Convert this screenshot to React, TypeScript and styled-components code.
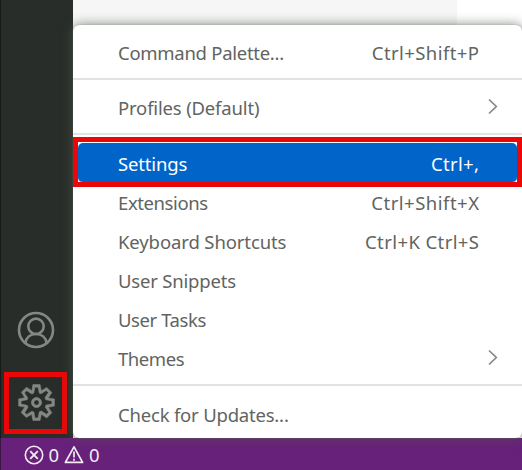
import React from 'react';
import styled, { createGlobalStyle } from 'styled-components';

const GlobalStyle = createGlobalStyle`
  * { box-sizing: border-box; }
  body { margin: 0; overflow: hidden; }
`;

const Window = styled.div`
  position: relative;
  width: 522px;
  height: 470px;
  overflow: hidden;
  display: grid;
  grid-template-columns: 73px 1fr;
  grid-template-rows: 438px 32px;
  background: #fff;
  font-family: 'Noto Sans', 'Open Sans', sans-serif;
`;

const ActivityBar = styled.nav`
  display: flex;
  flex-direction: column;
  align-items: center;
  justify-content: flex-end;
  background: #292d29;
  border-left: 1px solid #171917;
  padding: 0 1px 4px 0;
`;

const AccountButton = styled.div`
  display: flex;
  margin: 0 1px 23px 0;
`;

const GearFrame = styled.div`
  display: flex;
  align-items: center;
  justify-content: center;
  width: 63px;
  height: 62px;
  margin-right: 2px;
  padding: 0 0 1px 2px;
  border: 5px solid #eb0707;
`;

const Editor = styled.main`
  background: linear-gradient(to right, #f5f6f5 384px, #fff 384px);
`;

const StatusBar = styled.footer`
  grid-column: 1 / -1;
  display: flex;
  align-items: center;
  padding: 2px 0 0 22.5px;
  background: #68217a;
  border-left: 1px solid #3a1643;
  color: #f3ecf5;
  font-size: 18.5px;
  line-height: 24px;
  svg { display: block; }
`;

const Count = styled.span<{ $gap: number }>`
  margin: 0 ${p => p.$gap}px 0 5px;
`;

const Menu = styled.div`
  position: absolute;
  left: 73px;
  top: 25px;
  width: 449px;
  height: 413px;
  padding: 7px 5px 0;
  border-radius: 6px;
  background: #fff;
  box-shadow: 0 0 12px rgba(75, 88, 75, 0.72), 0 0 1px #889088;
`;

const Row = styled.div<{ $active?: boolean }>`
  display: flex;
  align-items: center;
  justify-content: space-between;
  height: 39px;
  padding: 3px 38px 0 40px;
  border-radius: 5px;
  font-size: 18.5px;
  line-height: 26px;
  white-space: nowrap;
  color: ${p => (p.$active ? '#fff' : '#616461')};
  background: ${p => (p.$active ? '#0064c8' : 'transparent')};
  box-shadow: ${p => (p.$active ? '0 1px 0 #9bbddd' : 'none')};
  svg { margin: -4px -20px 0 0; }
`;

const Label = styled.span<{ $track: number }>`
  letter-spacing: ${p => p.$track}px;
  margin-right: ${p => -p.$track}px;
`;

const Separator = styled.div<{ $after: number }>`
  height: 2px;
  margin: 7px -5px ${p => p.$after}px;
  background: #e0e3e2;
`;

const Highlight = styled.div`
  position: absolute;
  left: 73px;
  top: 137px;
  width: 449px;
  height: 50px;
  border: 5px solid #eb0707;
`;

const AccountIcon = () => (
  <svg width="38" height="38" viewBox="0 0 38 38" fill="none" stroke="#858785" strokeWidth="2.6">
    <circle cx="19" cy="19" r="17" />
    <circle cx="19" cy="15.3" r="7.7" />
    <path d="M8.3 32.2C9.2 26.7 13.2 23 19 23s9.8 3.7 10.7 9.2" />
  </svg>
);

const GearIcon = () => (
  <svg width="41" height="41" viewBox="0 0 16 16" fill="#858785" stroke="#858785" strokeWidth="0.2">
    <path
      fillRule="evenodd"
      d="M9.1 4.4L8.6 2H7.4l-.5 2.4-.7.3-2-1.3-.9.8 1.3 2-.2.7-2.4.5v1.2l2.4.5.3.8-1.3 2 .8.8 2-1.3.8.3.4 2.3h1.2l.5-2.4.8-.3 2 1.3.8-.8-1.3-2 .3-.8 2.3-.4V7.4l-2.4-.5-.3-.8 1.3-2-.8-.8-2 1.3-.7-.2zM9.4 1l.5 2.4L12 2.1l2 2-1.4 2.1 2.4.4v2.8l-2.4.5L14 12l-2 2-2.1-1.4-.5 2.4H6.6l-.5-2.4L4 13.9l-2-2 1.4-2.1L1 9.4V6.6l2.4-.5L2.1 4l2-2 2.1 1.4.4-2.4h2.8zm.6 7c0 1.1-.9 2-2 2s-2-.9-2-2 .9-2 2-2 2 .9 2 2zM8 9c.6 0 1-.4 1-1s-.4-1-1-1-1 .4-1 1 .4 1 1 1z"
    />
  </svg>
);

const Chevron = () => (
  <svg width="11" height="17" viewBox="0 0 11 17" fill="none" stroke="#858785" strokeWidth="1.7">
    <path d="M1 1.5L8.3 8.5L1 15.5" />
  </svg>
);

const ErrorIcon = () => (
  <svg width="20" height="20" viewBox="0 0 20 20" fill="none" stroke="#f3ecf5" strokeWidth="1.6">
    <circle cx="10" cy="10" r="8.7" />
    <path d="M6.2 6.2L13.8 13.8M13.8 6.2L6.2 13.8" strokeWidth="1.9" />
  </svg>
);

const WarningIcon = () => (
  <svg width="20" height="20" viewBox="0 0 20 20" fill="none" stroke="#f3ecf5" strokeWidth="1.7">
    <path d="M10 1.8L18.6 17.4H1.4Z" strokeLinejoin="round" />
    <path d="M10 6.5V12.6M10 13.8V15.7" />
  </svg>
);

interface ItemProps {
  label: string;
  track?: number;
  keys?: string;
  keyTrack?: number;
  submenu?: boolean;
  active?: boolean;
}

const Item = ({ label, track = 0, keys, keyTrack = 0, submenu, active }: ItemProps) => (
  <Row $active={active}>
    <Label $track={track}>{label}</Label>
    {keys && <Label $track={keyTrack}>{keys}</Label>}
    {submenu && <Chevron />}
  </Row>
);

export default function App() {
  return (
    <>
      <GlobalStyle />
      <Window>
        <ActivityBar>
          <AccountButton><AccountIcon /></AccountButton>
          <GearFrame><GearIcon /></GearFrame>
        </ActivityBar>
        <Editor />
        <StatusBar>
          <ErrorIcon />
          <Count $gap={5}>0</Count>
          <WarningIcon />
          <Count $gap={0}>0</Count>
        </StatusBar>
        <Menu>
          <Item label="Command Palette..." track={-0.28} keys="Ctrl+Shift+P" keyTrack={0.42} />
          <Separator $after={7} />
          <Item label="Profiles (Default)" track={-0.17} submenu />
          <Separator $after={8} />
          <Item label="Settings" track={-0.15} keys="Ctrl+," keyTrack={0.35} active />
          <Item label="Extensions" track={-0.4} keys="Ctrl+Shift+X" keyTrack={0.5} />
          <Item label="Keyboard Shortcuts" track={-0.11} keys="Ctrl+K Ctrl+S" keyTrack={0.4} />
          <Item label="User Snippets" track={-0.19} />
          <Item label="User Tasks" track={-0.42} />
          <Item label="Themes" track={-0.45} submenu />
          <Separator $after={8} />
          <Item label="Check for Updates..." track={-0.2} />
        </Menu>
        <Highlight />
      </Window>
    </>
  );
}
